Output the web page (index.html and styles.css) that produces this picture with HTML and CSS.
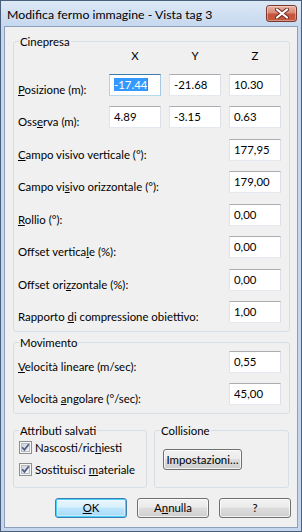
FILE: index.html
```html
<!DOCTYPE html>
<html>
<head>
<meta charset="utf-8">
<link rel="stylesheet" href="styles.css">
</head>
<body>
<div class="window">
  <div class="titlebar">
    <span class="title">Modifica fermo immagine - Vista tag 3</span>
    <div class="close">
      <svg width="14" height="11" viewBox="0 0 14 11">
        <path d="M2 1.5 L12 9.5 M12 1.5 L2 9.5" stroke="#6a2b22" stroke-width="4" stroke-linecap="round" fill="none"/>
        <path d="M2 1.5 L12 9.5 M12 1.5 L2 9.5" stroke="#ffffff" stroke-width="2.2" stroke-linecap="round" fill="none"/>
      </svg>
    </div>
  </div>
  <div class="client">
    <div class="group cine">
      <span class="legend">Cinepresa</span>
      <div class="hdr-row"><span class="hdr">X</span><span class="hdr">Y</span><span class="hdr">Z</span></div>
      <div class="grid cine-grid">
        <label class="lbl"><u>P</u>osizione (m):</label>
        <div class="field focus"><span class="sel">-17.44</span><span class="caret"></span></div>
        <div class="field">-21.68</div>
        <div class="field">10.30</div>

        <label class="lbl">Oss<u>e</u>rva (m):</label>
        <div class="field">4.89</div>
        <div class="field">-3.15</div>
        <div class="field">0.63</div>

        <label class="lbl span3"><u>C</u>ampo visivo verticale (°):</label>
        <div class="field">177,95</div>

        <label class="lbl span3">Campo vi<u>s</u>ivo orizzontale (°):</label>
        <div class="field">179,00</div>

        <label class="lbl span3"><u>R</u>ollio (°):</label>
        <div class="field">0,00</div>

        <label class="lbl span3">Offset vertica<u>l</u>e (%):</label>
        <div class="field">0,00</div>

        <label class="lbl span3">Offset ori<u>z</u>zontale (%):</label>
        <div class="field">0,00</div>

        <label class="lbl span3">Rapporto <u>d</u>i compressione obiettivo:</label>
        <div class="field">1,00</div>
      </div>
    </div>

    <div class="group movi">
      <span class="legend">Movimento</span>
      <div class="grid movi-grid">
        <label class="lbl span3"><u>V</u>elocità lineare (m/sec):</label>
        <div class="field">0,55</div>
        <label class="lbl span3">Velocità <u>a</u>ngolare (°/sec):</label>
        <div class="field">45,00</div>
      </div>
    </div>

    <div class="bottom-groups">
      <div class="group attr">
        <span class="legend">Attributi salvati</span>
        <div class="chk-row">
          <svg class="cb" width="13" height="13" viewBox="0 0 13 13">
            <defs>
              <linearGradient id="cbg" x1="0" y1="0" x2="1" y2="1">
                <stop offset="0" stop-color="#cdd1d6"/>
                <stop offset="1" stop-color="#f7f7f7"/>
              </linearGradient>
            </defs>
            <rect x="0.5" y="0.5" width="12" height="12" fill="#f6f6f6" stroke="#8e8f8f"/>
            <rect x="2.5" y="2.5" width="8" height="8" fill="url(#cbg)" stroke="#b7bcc2"/>
            <path d="M3.2 6.3 L5.4 8.8 L9.8 3.2" stroke="#4b5d86" stroke-width="1.7" fill="none"/>
          </svg>
          <span>Nascosti/ric<u>h</u>iesti</span>
        </div>
        <div class="chk-row second">
          <svg class="cb" width="13" height="13" viewBox="0 0 13 13">
            <rect x="0.5" y="0.5" width="12" height="12" fill="#f6f6f6" stroke="#8e8f8f"/>
            <rect x="2.5" y="2.5" width="8" height="8" fill="url(#cbg)" stroke="#b7bcc2"/>
            <path d="M3.2 6.3 L5.4 8.8 L9.8 3.2" stroke="#4b5d86" stroke-width="1.7" fill="none"/>
          </svg>
          <span>Sostituisci <u>m</u>ateriale</span>
        </div>
      </div>
      <div class="group coll">
        <span class="legend">Collisione</span>
        <div class="btn small">Impostazioni…</div>
      </div>
    </div>

    <div class="buttons">
      <div class="btn default"><u>O</u>K</div>
      <div class="btn">A<u>n</u>nulla</div>
      <div class="btn">?</div>
    </div>
  </div>
</div>
</body>
</html>
```

FILE: styles.css
```css
html, body {
  margin: 0;
  padding: 0;
  background: #ffffff;
}

body {
  font-family: Lato, "Liberation Sans", sans-serif;
  font-size: 11.4px;
  color: #000000;
}

u {
  text-decoration: underline;
  text-underline-offset: 1px;
}

.window {
  width: 302px;
  height: 532px;
  box-sizing: border-box;
  border: 1px solid #4a5f7b;
  background: linear-gradient(#dce8f6 0px, #c6d8ef 25px, #c3d6ee 100%);
  display: flex;
  flex-direction: column;
}

.titlebar {
  height: 25px;
  display: flex;
  align-items: center;
  padding-left: 6px;
  flex: none;
}

.title {
  font-size: 12.3px;
  line-height: 15px;
  white-space: nowrap;
  margin-top: 1px;
}

.close {
  margin-left: auto;
  margin-right: 4px;
  align-self: flex-start;
  margin-top: 4px;
  width: 31px;
  height: 17px;
  box-sizing: border-box;
  border: 1px solid #7b3a2f;
  border-radius: 3px;
  background: linear-gradient(#ebb2a4 0%, #d88a76 45%, #c7543c 55%, #c4593f 100%);
  box-shadow: inset 0 0 0 1px rgba(255, 255, 255, 0.35);
  display: flex;
  align-items: center;
  justify-content: center;
}

.client {
  flex: 1;
  margin: 0 3px 3px 3px;
  border: 1px solid #8aa0bc;
  background: #f0f0f0;
  padding-left: 8px;
  display: flex;
  flex-direction: column;
}

.group {
  position: relative;
  box-sizing: border-box;
  border: 1px solid #d5dfe5;
  border-radius: 3px;
}

.legend {
  position: absolute;
  top: -8px;
  left: 5px;
  padding: 0 1px;
  line-height: 15px;
  background: #f0f0f0;
  white-space: nowrap;
}

.cine {
  width: 277px;
  margin-top: 14px;
  padding: 6px 0 8px 4px;
}

.hdr-row {
  display: flex;
  gap: 8px;
  margin-left: 91px;
  height: 15px;
  line-height: 15px;
  margin-bottom: 11px;
}

.hdr {
  width: 52px;
  text-align: center;
}

.grid {
  display: grid;
  grid-template-columns: 83px 52px 52px 52px;
  column-gap: 8px;
  grid-auto-rows: 22px;
}

.cine-grid {
  row-gap: 10.43px;
}

.movi-grid {
  row-gap: 10px;
}

.lbl {
  padding-top: 8px;
  line-height: 15px;
  white-space: nowrap;
}

.span3 {
  grid-column: 1 / 4;
}

.field {
  box-sizing: border-box;
  height: 22px;
  border: 1px solid;
  border-color: #abadb3 #dbdfe6 #e3e9ef #e2e3ea;
  background: #ffffff;
  padding: 3px 4px 0;
  line-height: 13px;
  white-space: nowrap;
  display: flex;
  align-items: flex-start;
}

.field.focus {
  border-color: #3d7bad #a4c9e3 #b7d9ed #b5cfe7;
}

.sel {
  background: #3399ff;
  color: #ffffff;
}

.caret {
  width: 1px;
  height: 13px;
  background: #cc6600;
}

.movi {
  width: 277px;
  margin-top: 10px;
  padding: 8px 0 8px 4px;
}

.bottom-groups {
  display: flex;
  gap: 7px;
  margin-top: 16px;
}

.attr {
  width: 134px;
  height: 58px;
  padding: 9px 0 0 5px;
}

.coll {
  width: 135px;
  height: 58px;
  padding: 18px 0 0 8px;
}

.chk-row {
  display: flex;
  align-items: center;
  gap: 3px;
  height: 15px;
  line-height: 15px;
  white-space: nowrap;
}

.chk-row.second {
  margin-top: 7px;
}

.cb {
  flex: none;
  display: block;
}

.btn {
  box-sizing: border-box;
  width: 72px;
  height: 20px;
  border: 1px solid #707070;
  border-radius: 3px;
  background: linear-gradient(#f2f2f2 0%, #ebebeb 45%, #dddddd 50%, #cfcfcf 100%);
  box-shadow: inset 0 0 0 1px rgba(255, 255, 255, 0.7);
  display: flex;
  align-items: center;
  justify-content: center;
  line-height: 15px;
  white-space: nowrap;
}

.btn.small {
  width: 79px;
  height: 21px;
}

.btn.default {
  border-color: #3c7fb1;
  background: linear-gradient(#eaf6fd 0%, #d9f0fc 45%, #bee6fd 50%, #a7d9f5 100%);
  box-shadow: inset 0 0 0 1px #48cffb, inset 0 0 0 2px rgba(255, 255, 255, 0.4);
}

.buttons {
  display: flex;
  gap: 10px;
  margin-top: 10px;
  padding-left: 42px;
}
```
